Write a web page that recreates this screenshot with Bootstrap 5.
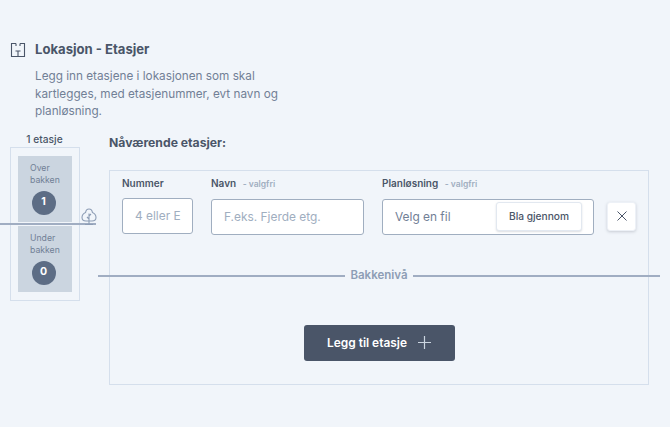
<!DOCTYPE html>
<html lang="no">
<head>
<meta charset="utf-8">
<title>Lokasjon - Etasjer</title>
<link href="https://cdn.jsdelivr.net/npm/bootstrap@5.3.0/dist/css/bootstrap.min.css" rel="stylesheet">
<style>
html,body{height:100%}
body{background:#f1f5fa;font-family:Inter,"Liberation Sans",sans-serif;color:#4a5568;overflow:hidden;position:relative}
.page-wrap{padding:41px 22px 0 10px}
.head-ico{width:16px;height:16px;margin-top:1px;margin-right:9px;flex:none}
.page-title{font-size:13.1px;line-height:17px;font-weight:700;color:#4a5568;margin:0}
.page-desc{font-size:11.75px;line-height:17.5px;color:#718096;margin:10px 0 0 25px;width:250px}
.main-row{margin-top:10px}
.side-col{width:70px;flex:none;margin-left:-.5px;margin-right:29.5px}
.side-lab{font-size:10.2px;line-height:14px;font-weight:500;color:#4a5568;text-align:center;margin:0 0 1px;padding-top:1px}
.side-box{border:1px solid #d5dfec;padding:8px 7px 8px;height:154px}
.side-tile{background:#cbd5e0;height:66px;padding:6px 0 0 12.5px;font-size:8.7px;line-height:12.5px;color:#718096;display:flex;flex-direction:column}
.side-tile+.side-tile{margin-top:4px}
.side-num{width:24px;height:24px;border-radius:50%;background:#5d6d85;color:#fff;font-size:10.5px;font-weight:700;display:flex;align-items:center;justify-content:center;margin:4px 0 0 1.5px}
.cur-title{font-size:12.2px;line-height:17px;font-weight:700;color:#4a5568;margin:0 0 19px;padding-top:3px}
.floor-box{border:1px solid #d5dfec;height:215px;padding:6px 12px 0 12px;width:540px}
.f-row{gap:18px}
.f-lab{font-size:10px;line-height:13px;font-weight:600;color:#4a5568;margin-bottom:8px;white-space:nowrap}
.f-lab span{font-size:8.5px;color:#a0aec0;margin-left:4px}
.f-input{height:36px;border:1px solid #a0aec0;border-radius:3px;background:#fff;font-size:11.9px;color:#a0aec0;padding:0 12px;display:flex;align-items:center;white-space:nowrap;overflow:hidden}
.f-num{width:71px}
.f-name{width:153px}
.f-plan{width:212px;color:#718096;padding-right:11px;justify-content:space-between}
.browse-btn{height:29px;width:86px;border:1px solid #e2e8f0;border-radius:3px;background:#fff;box-shadow:0 1px 2px rgba(74,85,104,.2);color:#4a5568;font-size:10.2px;font-weight:500;display:flex;align-items:center;justify-content:center;padding:0}
.del-btn{width:29px;height:29px;margin:25px 0 0 -5px;border:1px solid #edf1f7;border-radius:3px;background:#fff;box-shadow:0 1px 3px rgba(74,85,104,.25);padding:0;display:flex;align-items:center;justify-content:center}
.add-wrap{margin-top:90px}
.add-btn{width:151px;height:36px;background:#4a5568;border:0;border-radius:3px;color:#fff;font-size:11.9px;font-weight:600;display:flex;align-items:center;justify-content:center;gap:11px;padding:0}
.ground-left{position:absolute;left:0;top:223px;width:96px;height:2px;background:#a0adc2}
.tree-ico{position:absolute;left:81px;top:208px;width:16px;height:18px}
.ground-mid{position:absolute;left:98px;top:270px;width:562px;display:flex;align-items:center;gap:5px;font-size:11.5px;line-height:1;font-weight:600;color:#8d9db5}
.ground-mid i{flex:1;height:2px;background:#a0adc2}
</style>
</head>
<body>
<div class="page-wrap">
  <div class="d-flex align-items-start">
    <svg class="head-ico" viewBox="0 0 16 16" fill="none" stroke="#4a5568" stroke-width="1.1"><path d="M6 1.5H1.5V14.5H14.5V1.5H10M6 1.5V4M10 1.5V4M5.5 9H10.5M8 9V14.5"/></svg>
    <h1 class="page-title">Lokasjon - Etasjer</h1>
  </div>
  <p class="page-desc">Legg inn etasjene i lokasjonen som skal kartlegges, med etasjenummer, evt navn og planløsning.</p>
  <div class="d-flex main-row">
    <div class="side-col">
      <p class="side-lab">1 etasje</p>
      <div class="side-box">
        <div class="side-tile">Over<br>bakken<div class="side-num">1</div></div>
        <div class="side-tile">Under<br>bakken<div class="side-num">0</div></div>
      </div>
    </div>
    <div>
      <h2 class="cur-title">Nåværende etasjer:</h2>
      <div class="floor-box">
        <div class="d-flex f-row">
          <div class="f-field"><div class="f-lab">Nummer</div><div class="f-input f-num">4 eller E</div></div>
          <div class="f-field"><div class="f-lab">Navn <span>- valgfri</span></div><div class="f-input f-name">F.eks. Fjerde etg.</div></div>
          <div class="f-field"><div class="f-lab">Planløsning <span>- valgfri</span></div><div class="f-input f-plan">Velg en fil<button type="button" class="browse-btn">Bla gjennom</button></div></div>
          <button type="button" class="del-btn" aria-label="Fjern"><svg width="12" height="12" viewBox="0 0 12 12" fill="none" stroke="#4a5568" stroke-width="1"><path d="M1.5 1.5 10.5 10.5M10.5 1.5 1.5 10.5"/></svg></button>
        </div>
        <div class="d-flex justify-content-center add-wrap">
          <button type="button" class="add-btn">Legg til etasje <svg width="13" height="13" viewBox="0 0 13 13" fill="none" stroke="#cbd5e0" stroke-width="1.2"><path d="M6.5 0V13M0 6.5H13"/></svg></button>
        </div>
      </div>
    </div>
  </div>
</div>
<div class="ground-left"></div>
<svg class="tree-ico" viewBox="0 0 16 18" fill="none" stroke="#8d9db5" stroke-width="1.1"><path d="M8 1C5.8 1 4.8 2.7 4.6 4.4 3 5 1 7 1 9.6 1 12 3 13 5 13H11C13 13 15 12 15 9.6 15 7 13 5 11.4 4.4 11.2 2.7 10.2 1 8 1ZM8 16.5V5.5M8 8 10 6M8 11 6 9M4 16.5H12"/></svg>
<div class="ground-mid"><i></i><span>Bakkenivå</span><i></i></div>
</body>
</html>
